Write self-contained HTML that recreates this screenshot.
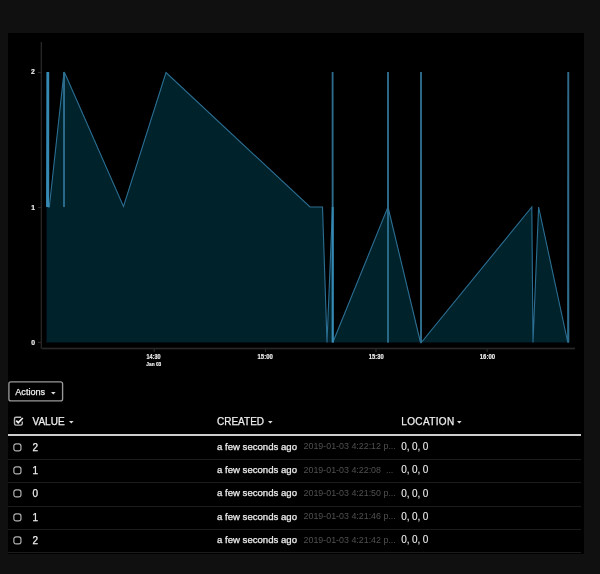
<!DOCTYPE html>
<html><head><meta charset="utf-8">
<style>
html,body{margin:0;padding:0;}
body{width:600px;height:574px;background:#101010;position:relative;overflow:hidden;font-family:"Liberation Sans",sans-serif;color:#eeeeee;}
.wrap{position:absolute;left:0;top:0;width:600px;height:574px;filter:url(#soft);}
.panel{position:absolute;left:8px;top:33px;width:576px;height:521px;background:#000;}
svg.chart{position:absolute;left:0;top:0;}
.btn{position:absolute;left:8px;top:381px;width:53px;height:19px;border:1px solid #9a9a9a;border-radius:2px;}
.t{position:absolute;white-space:nowrap;font-size:10px;line-height:10px;-webkit-text-stroke:0.25px #eeeeee;}
.gray{-webkit-text-stroke:0;}
.created{font-size:9.6px;}
.hline{position:absolute;left:8px;width:573px;height:2px;background:#cdcdcd;}
.rline{position:absolute;left:8px;width:573px;height:1px;background:#1a1a1a;}
.gray{color:#505050;margin-left:6.5px;font-size:8.9px;position:relative;top:-0.5px;}
</style></head>
<body><svg width="0" height="0" style="position:absolute"><filter id="soft" x="0" y="0" width="100%" height="100%"><feGaussianBlur stdDeviation="0.45"/></filter></svg><div class="wrap">
<div class="panel"></div>
<svg class="chart" width="600" height="574" viewBox="0 0 600 574">
  <line x1="41.3" y1="42" x2="41.3" y2="348.5" stroke="#2b2829" stroke-width="1.3"/>
  <line x1="41.5" y1="348.5" x2="575" y2="348.5" stroke="#2b2829" stroke-width="1.3"/>
  <line x1="38" y1="72.5" x2="41.5" y2="72.5" stroke="#2b2829" stroke-width="1.3"/>
  <line x1="38" y1="207.5" x2="41.5" y2="207.5" stroke="#2b2829" stroke-width="1.3"/>
  <line x1="38" y1="342.5" x2="41.5" y2="342.5" stroke="#2b2829" stroke-width="1.3"/>
  <line x1="154.2" y1="348.5" x2="154.2" y2="351.8" stroke="#2b2829" stroke-width="1.3"/>
  <line x1="265.5" y1="348.5" x2="265.5" y2="351.8" stroke="#2b2829" stroke-width="1.3"/>
  <line x1="376" y1="348.5" x2="376" y2="351.8" stroke="#2b2829" stroke-width="1.3"/>
  <line x1="487.2" y1="348.5" x2="487.2" y2="351.8" stroke="#2b2829" stroke-width="1.3"/>
  <path d="M46.5,342.5 L46.5,207 L47.5,72 L48.5,207 L49.3,207 L64,72 L64,207 L64.3,72 L123.5,206.5 L166,72.5 L310,207 L322.5,207 L327,342.5 L332.5,207 L332.5,72 L332.8,342.5 L388,207 L388,72 L388,342.5 L388,207 L420.5,342.5 L421,72 L421.3,342.5 L531.8,207 L533,342.5 L538.6,207 L567.8,342.5 L568.3,72 L568.6,342.5 Z" fill="#04202b" stroke="none"/>
  <path d="M46.5,207 L47.5,72 L48.5,207 L49.3,207 L64,72 L64,207 L64.3,72 L123.5,206.5 L166,72.5 L310,207 L322.5,207 L327,342.5 L332.5,207 L332.5,72 L332.8,342.5 L388,207 L388,72 L388,342.5 L388,207 L420.5,342.5 L421,72 L421.3,342.5 L531.8,207 L533,342.5 L538.6,207 L567.8,342.5 L568.3,72 L568.6,342.5" fill="none" stroke="#2a6f92" stroke-width="1.1" stroke-linejoin="miter"/>
  <g stroke-linecap="butt">
  <line x1="47.8" y1="72" x2="47.8" y2="207" stroke="#3589b3" stroke-width="2.8"/>
  <line x1="64" y1="72" x2="64" y2="207" stroke="#2f6c8c" stroke-width="1.8"/>
  <line x1="332.6" y1="72" x2="332.6" y2="207" stroke="#2f6c8c" stroke-width="1.8"/>
  <line x1="332.7" y1="207" x2="332.7" y2="342.5" stroke="#3589b3" stroke-width="2.2"/>
  <line x1="388" y1="72" x2="388" y2="342.5" stroke="#2f6c8c" stroke-width="1.8"/>
  <line x1="421" y1="72" x2="421" y2="342.5" stroke="#2f6c8c" stroke-width="1.8"/>
  <line x1="568.3" y1="72" x2="568.3" y2="342.5" stroke="#2f6c8c" stroke-width="1.8"/>
  </g>
  <g font-family="Liberation Sans" font-weight="bold" font-size="7" fill="#ececec" stroke="#ececec" stroke-width="0.18">
    <text x="34.8" y="74.3" text-anchor="end" font-size="6.8">2</text>
    <text x="35" y="209.8" text-anchor="end" font-size="6.8">1</text>
    <text x="35" y="345.2" text-anchor="end" font-size="6.8">0</text>
    <text x="146.5" y="359.2" font-size="6.5" textLength="14" lengthAdjust="spacingAndGlyphs">14:30</text>
    <text x="146.3" y="366.2" font-size="5.2" textLength="15" lengthAdjust="spacingAndGlyphs">Jan 03</text>
    <text x="257.5" y="359.2" font-size="6.5" textLength="15.3" lengthAdjust="spacingAndGlyphs">15:00</text>
    <text x="368.8" y="359.2" font-size="6.5" textLength="14.8" lengthAdjust="spacingAndGlyphs">15:30</text>
    <text x="479.8" y="359.2" font-size="6.5" textLength="15.3" lengthAdjust="spacingAndGlyphs">16:00</text>
  </g>
</svg>

<svg style="position:absolute;left:0;top:370px" width="80" height="40"><rect x="8.9" y="11.8" width="53.7" height="19.1" rx="2" fill="none" stroke="#999999" stroke-width="1.35"/></svg>
<div class="t" style="left:15.3px;top:388px;font-size:9.1px;line-height:9px;">Actions</div>
<svg style="position:absolute;left:51px;top:392px" width="6" height="4"><path d="M0,0 L4.6,0 L2.3,2.5 Z" fill="#dddddd"/></svg>

<svg style="position:absolute;left:13px;top:415px" width="12" height="12"><path d="M8.6,2.3 L8.6,1.4 Q8.6,1.4 8.6,1.4" fill="none"/><path d="M8.2,2.2 L3,2.2 Q1.5,2.2 1.5,3.7 L1.5,8.6 Q1.5,10.1 3,10.1 L7.8,10.1 Q9.3,10.1 9.3,8.6 L9.3,6.5" fill="none" stroke="#b8b8b8" stroke-width="1.4"/><path d="M3.2,5.6 L5.2,7.7 L9.8,3" fill="none" stroke="#eeeeee" stroke-width="1.7"/></svg>
<div class="t" style="left:32.5px;top:417px;">VALUE</div>
<svg style="position:absolute;left:69.3px;top:420.5px" width="6" height="4"><path d="M0,0 L4.6,0 L2.3,2.5 Z" fill="#dddddd"/></svg>
<div class="t" style="left:217px;top:417px;">CREATED</div>
<svg style="position:absolute;left:267.5px;top:420.5px" width="6" height="4"><path d="M0,0 L4.6,0 L2.3,2.5 Z" fill="#dddddd"/></svg>
<div class="t" style="left:401.3px;top:417px;letter-spacing:0.35px;">LOCATION</div>
<svg style="position:absolute;left:457px;top:420.5px" width="6" height="4"><path d="M0,0 L4.6,0 L2.3,2.5 Z" fill="#dddddd"/></svg>
<div class="hline" style="top:434px;"></div>
<svg style="position:absolute;left:13.2px;top:443px" width="12" height="12"><rect x="0.85" y="0.85" width="7.1" height="7.1" rx="2.2" fill="none" stroke="#b0b0b0" stroke-width="1.2"/></svg>
<div class="t" style="left:32.5px;top:443px;">2</div>
<div class="t created" style="left:217px;top:441.87px;">a few seconds ago<span class="gray">2019-01-03 4:22:12 p...</span></div>
<div class="t" style="left:401.3px;top:442.10px;font-size:10px;letter-spacing:-0.15px;-webkit-text-stroke:0.1px #eee;">0, 0, 0</div>
<div class="rline" style="top:458.90px;"></div>
<svg style="position:absolute;left:13.2px;top:466px" width="12" height="12"><rect x="0.85" y="0.85" width="7.1" height="7.1" rx="2.2" fill="none" stroke="#b0b0b0" stroke-width="1.2"/></svg>
<div class="t" style="left:32.5px;top:466px;">1</div>
<div class="t created" style="left:217px;top:465.17px;">a few seconds ago<span class="gray">2019-01-03 4:22:08 &nbsp;...</span></div>
<div class="t" style="left:401.3px;top:465.40px;font-size:10px;letter-spacing:-0.15px;-webkit-text-stroke:0.1px #eee;">0, 0, 0</div>
<div class="rline" style="top:482.20px;"></div>
<svg style="position:absolute;left:13.2px;top:489px" width="12" height="12"><rect x="0.85" y="0.85" width="7.1" height="7.1" rx="2.2" fill="none" stroke="#b0b0b0" stroke-width="1.2"/></svg>
<div class="t" style="left:32.5px;top:489px;">0</div>
<div class="t created" style="left:217px;top:488.47px;">a few seconds ago<span class="gray">2019-01-03 4:21:50 p...</span></div>
<div class="t" style="left:401.3px;top:488.70px;font-size:10px;letter-spacing:-0.15px;-webkit-text-stroke:0.1px #eee;">0, 0, 0</div>
<div class="rline" style="top:505.50px;"></div>
<svg style="position:absolute;left:13.2px;top:513px" width="12" height="12"><rect x="0.85" y="0.85" width="7.1" height="7.1" rx="2.2" fill="none" stroke="#b0b0b0" stroke-width="1.2"/></svg>
<div class="t" style="left:32.5px;top:513px;">1</div>
<div class="t created" style="left:217px;top:511.77px;">a few seconds ago<span class="gray">2019-01-03 4:21:46 p...</span></div>
<div class="t" style="left:401.3px;top:512.00px;font-size:10px;letter-spacing:-0.15px;-webkit-text-stroke:0.1px #eee;">0, 0, 0</div>
<div class="rline" style="top:528.80px;"></div>
<svg style="position:absolute;left:13.2px;top:536px" width="12" height="12"><rect x="0.85" y="0.85" width="7.1" height="7.1" rx="2.2" fill="none" stroke="#b0b0b0" stroke-width="1.2"/></svg>
<div class="t" style="left:32.5px;top:536px;">2</div>
<div class="t created" style="left:217px;top:535.07px;">a few seconds ago<span class="gray">2019-01-03 4:21:42 p...</span></div>
<div class="t" style="left:401.3px;top:535.30px;font-size:10px;letter-spacing:-0.15px;-webkit-text-stroke:0.1px #eee;">0, 0, 0</div>
<div class="rline" style="top:552.10px;"></div>
</div></body></html>
